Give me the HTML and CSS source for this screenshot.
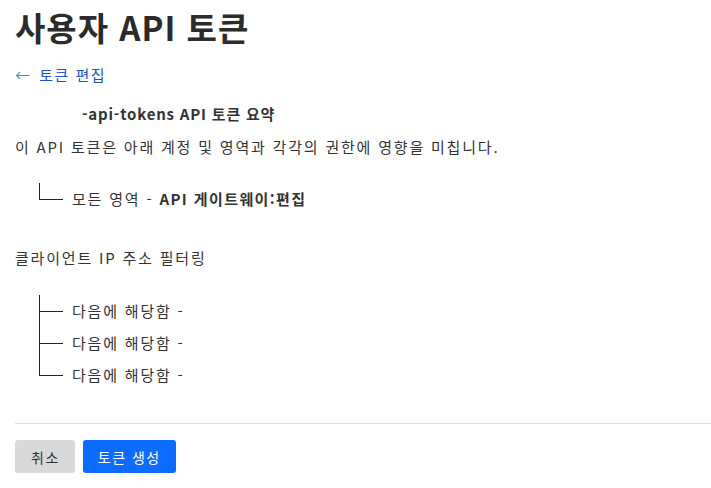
FILE: index.html
```html
<!DOCTYPE html>
<html lang="ko">
<head>
    <meta charset="UTF-8">
    <title>사용자 API 토큰</title>
    <link rel="stylesheet" href="styles.css">
</head>
<body>
    <div class="page">
        <h1 class="title">사용자 API 토큰</h1>
        <a class="back" href="#"><span class="arrow">←</span> 토큰 편집</a>

        <h4 class="summary">-api-tokens API 토큰 요약</h4>
        <p class="desc">이 API 토큰은 아래 계정 및 영역과 각각의 권한에 영향을 미칩니다.</p>

        <ul class="tree">
            <li>모든 영역 - <b>API 게이트웨이:편집</b></li>
        </ul>

        <p class="desc ip">클라이언트 IP 주소 필터링</p>

        <ul class="tree">
            <li>다음에 해당함 -</li>
            <li>다음에 해당함 -</li>
            <li>다음에 해당함 -</li>
        </ul>

        <div class="actions">
            <button class="btn cancel">취소</button>
            <button class="btn primary">토큰 생성</button>
        </div>
    </div>
</body>
</html>
```

FILE: styles.css
```css
body { margin: 0; font-family: "Noto Sans CJK KR", "Noto Sans", sans-serif; color: #333; font-size: 15px; letter-spacing: 1.8px; background: #fff; }
.page { padding: 4px 0 0 15px; }
.title { font-size: 33px; font-weight: 700; margin: 0; line-height: 46px; letter-spacing: 1px; color: #2b2b2b; }
.back { display: inline-block; margin-top: 15px; color: #1a55c8; text-decoration: none; line-height: 20px; letter-spacing: 1.5px; }
.back .arrow { color: #4a7fd8; margin-right: 2px; }
.summary { margin: 19px 0 0 67px; font-size: 15px; font-weight: 700; line-height: 20px; letter-spacing: 0.8px; }
.desc { margin: 13px 0 0; line-height: 20px; }
.tree { list-style: none; margin: 26px 0 0 24px; padding: 0; }
.tree li { position: relative; padding-left: 33px; line-height: 32px; }
.tree li::before { content: ""; position: absolute; left: 0; top: -16px; height: 32px; border-left: 1px solid #222; }
.tree li:first-child::before { top: 0; height: 16px; }
.tree li::after { content: ""; position: absolute; left: 0; top: 16px; width: 24px; border-top: 1px solid #222; }
.tree b { letter-spacing: 1.4px; }
.desc.ip { margin-top: 33px; }
.ip + .tree { margin-top: 27px; }
.actions { margin-top: 32px; border-top: 1px solid #ddd; padding-top: 16px; display: flex; gap: 8px; }
.btn { font-family: inherit; font-size: 14px; letter-spacing: 1.5px; border: none; border-radius: 3px; height: 33px; padding: 0 15px 0 16px; cursor: pointer; }
.cancel { background: #d9d9d9; color: #333; }
.primary { background: #0b6cff; color: #fff; padding: 0 15px; }
```
